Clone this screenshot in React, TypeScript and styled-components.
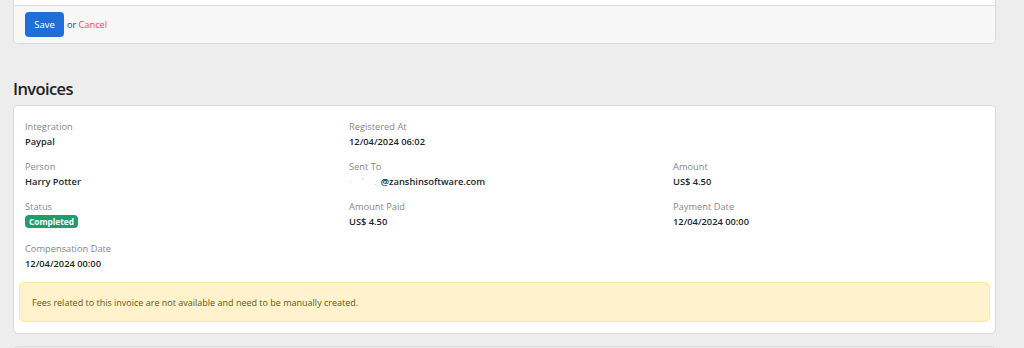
import React from "react";
import styled, { createGlobalStyle } from "styled-components";

const Global = createGlobalStyle`
  html, body { margin: 0; padding: 0; background: #ededed; }
  body { font-family: "Open Sans", "Noto Sans", Arial, sans-serif; color: #212529; }
  * { box-sizing: border-box; }
`;

const Page = styled.div`
  width: 1024px;
  height: 348px;
  overflow: hidden;
  padding: 0 28px 0 13px;
`;

const FormCard = styled.div`
  background: #fff;
  border: 1px solid #dadada;
  border-top: none;
  border-radius: 0 0 5px 5px;
  overflow: hidden;
`;

const FormBody = styled.div`
  height: 5px;
  background: #fff;
`;

const FormFooter = styled.div`
  display: flex;
  align-items: center;
  gap: 2px;
  background: #f7f7f7;
  border-top: 1px solid #dedede;
  padding: 6px 11px;
  font-size: 9.3px;
  color: #444;
`;

const SaveButton = styled.button`
  width: 39px;
  height: 25px;
  border: none;
  border-radius: 4px;
  background: #1f6fd6;
  color: #fff;
  font-family: inherit;
  font-size: 9.5px;
  padding: 0;
  margin-right: 1px;
`;

const CancelLink = styled.a`
  color: #ee4a5d;
  text-decoration: none;
`;

const Heading = styled.h2`
  margin: 34px 0 5px;
  font-size: 16.5px;
  font-weight: 600;
  line-height: 22px;
  color: #222;
  letter-spacing: -0.6px;
`;

const Card = styled.div`
  background: #fff;
  border: 1px solid #dadada;
  border-radius: 5px;
  padding: 13px 5px 11px;
`;

const FieldGrid = styled.div`
  display: grid;
  grid-template-columns: 324px 324px 1fr;
  row-gap: 10px;
  padding: 0 6px;
`;

const Field = styled.div`
  display: flex;
  flex-direction: column;
  min-height: 30px;
`;

const Label = styled.div`
  font-size: 9.3px;
  line-height: 15px;
  color: #888;
`;

const Value = styled.div`
  font-size: 9.3px;
  line-height: 15px;
  font-weight: 600;
  color: #212529;
  white-space: nowrap;
`;

const Redacted = styled.span`
  color: #c8c8c8;
  font-weight: 400;
  letter-spacing: 4px;
`;

const Badge = styled.span`
  align-self: flex-start;
  margin: 1px 0 3px;
  background: #1f9d6b;
  color: #fff;
  font-size: 8.3px;
  font-weight: 700;
  line-height: 13px;
  padding: 0 4px;
  border-radius: 4px;
`;

const Alert = styled.div`
  margin-top: 11px;
  background: #fff2cc;
  border: 1px solid #fde8a8;
  border-radius: 5px;
  padding: 11.5px 12px;
  font-size: 9px;
  line-height: 15px;
  color: #6b5410;
`;

const NextCard = styled.div`
  margin-top: 12px;
  height: 20px;
  background: #ececec;
  border: 1px solid #dadada;
  border-radius: 5px;
`;

type F = { label: string; value: React.ReactNode; badge?: boolean };

const fields: (F | null)[] = [
  { label: "Integration", value: "Paypal" },
  { label: "Registered At", value: "12/04/2024 06:02" },
  null,
  { label: "Person", value: "Harry Potter" },
  {
    label: "Sent To",
    value: (
      <>
        <Redacted>{"·    '  ."}</Redacted>@zanshinsoftware.com
      </>
    ),
  },
  { label: "Amount", value: "US$ 4.50" },
  { label: "Status", value: "Completed", badge: true },
  { label: "Amount Paid", value: "US$ 4.50" },
  { label: "Payment Date", value: "12/04/2024 00:00" },
  { label: "Compensation Date", value: "12/04/2024 00:00" },
];

export default function App() {
  return (
    <>
      <Global />
      <Page>
        <FormCard>
          <FormBody />
          <FormFooter>
            <SaveButton>Save</SaveButton>
            <span>or</span>
            <CancelLink href="#">Cancel</CancelLink>
          </FormFooter>
        </FormCard>
        <Heading>Invoices</Heading>
        <Card>
          <FieldGrid>
            {fields.map((f, i) =>
              f ? (
                <Field key={i}>
                  <Label>{f.label}</Label>
                  {f.badge ? <Badge>{f.value}</Badge> : <Value>{f.value}</Value>}
                </Field>
              ) : (
                <div key={i} />
              )
            )}
          </FieldGrid>
          <Alert>Fees related to this invoice are not available and need to be manually created.</Alert>
        </Card>
        <NextCard />
      </Page>
    </>
  );
}
